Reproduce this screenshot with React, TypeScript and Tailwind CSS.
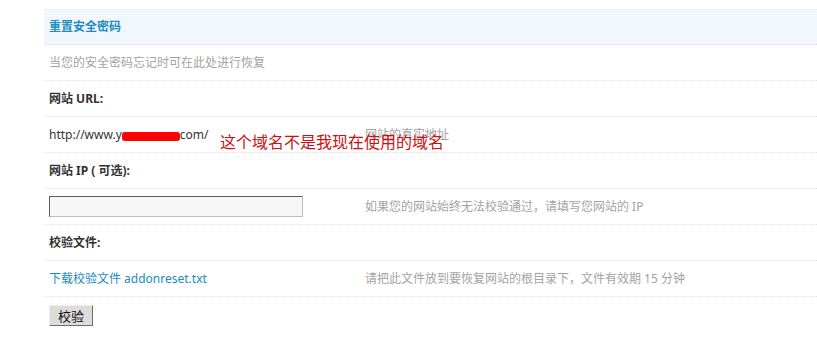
const FONT = { fontFamily: '"Noto Sans", "Noto Sans CJK SC", sans-serif' };

function Row({ left, right, children }: { left?: React.ReactNode; right?: React.ReactNode; children?: React.ReactNode }) {
  return (
    <div className="relative flex items-center h-[36px] border-b border-dotted border-[#dde2e6]">
      <div className="w-[316px] pl-[5px] shrink-0">{left}</div>
      <div className="pl-[5px] text-[#a3a3a3]">{right}</div>
      {children}
    </div>
  );
}

export default function App() {
  return (
    <div className="w-[817px] h-[347px] bg-white overflow-hidden text-[12px] leading-[16px]" style={FONT}>
      <div className="ml-[44px] mt-[9px]">
        <div className="flex items-center h-[36px] pl-[5px] bg-[#f1f7fc] border-t border-[#e8edf1] border-b border-b-[#d3dde5] border-dotted">
          <span className="font-bold text-[#1a8cc0]">重置安全密码</span>
        </div>

        <Row left={<span className="text-[#a3a3a3]">当您的安全密码忘记时可在此处进行恢复</span>} />

        <Row left={<span className="font-bold text-[#333]">网站 URL:</span>} />

        <Row
          left={
            <span className="text-[#333] inline-flex items-center">
              http://www.y
              <span className="inline-block w-[58px] h-[9px] bg-[#ff0000] rounded-[3px] mt-[4px]" />
              com/
            </span>
          }
          right="网站的真实地址"
        >
          <span className="absolute left-[176px] top-[14px] text-[16px] leading-[22px] text-[#d01010] whitespace-nowrap">
            这个域名不是我现在使用的域名
          </span>
        </Row>

        <Row left={<span className="font-bold text-[#333]">网站 IP ( 可选):</span>} />

        <Row
          left={
            <div className="w-[254px] h-[21px] bg-[#f7f7f7] border border-[#bdbdbd] border-t-[#5f5f5f] border-l-[#5f5f5f]" />
          }
          right="如果您的网站始终无法校验通过，请填写您网站的 IP"
        />

        <Row left={<span className="font-bold text-[#333]">校验文件:</span>} />

        <Row
          left={<span className="text-[#1a8cc0]">下载校验文件 addonreset.txt</span>}
          right="请把此文件放到要恢复网站的根目录下，文件有效期 15 分钟"
        />

        <div className="pl-[5px] pt-[8px]">
          <button className="w-[44px] h-[21px] bg-[#dcdcdc] border border-[#f0f0f0] border-r-[#6d6d6d] border-b-[#6d6d6d] text-[13px] leading-[18px] text-[#111]">
            校验
          </button>
        </div>
      </div>
    </div>
  );
}
